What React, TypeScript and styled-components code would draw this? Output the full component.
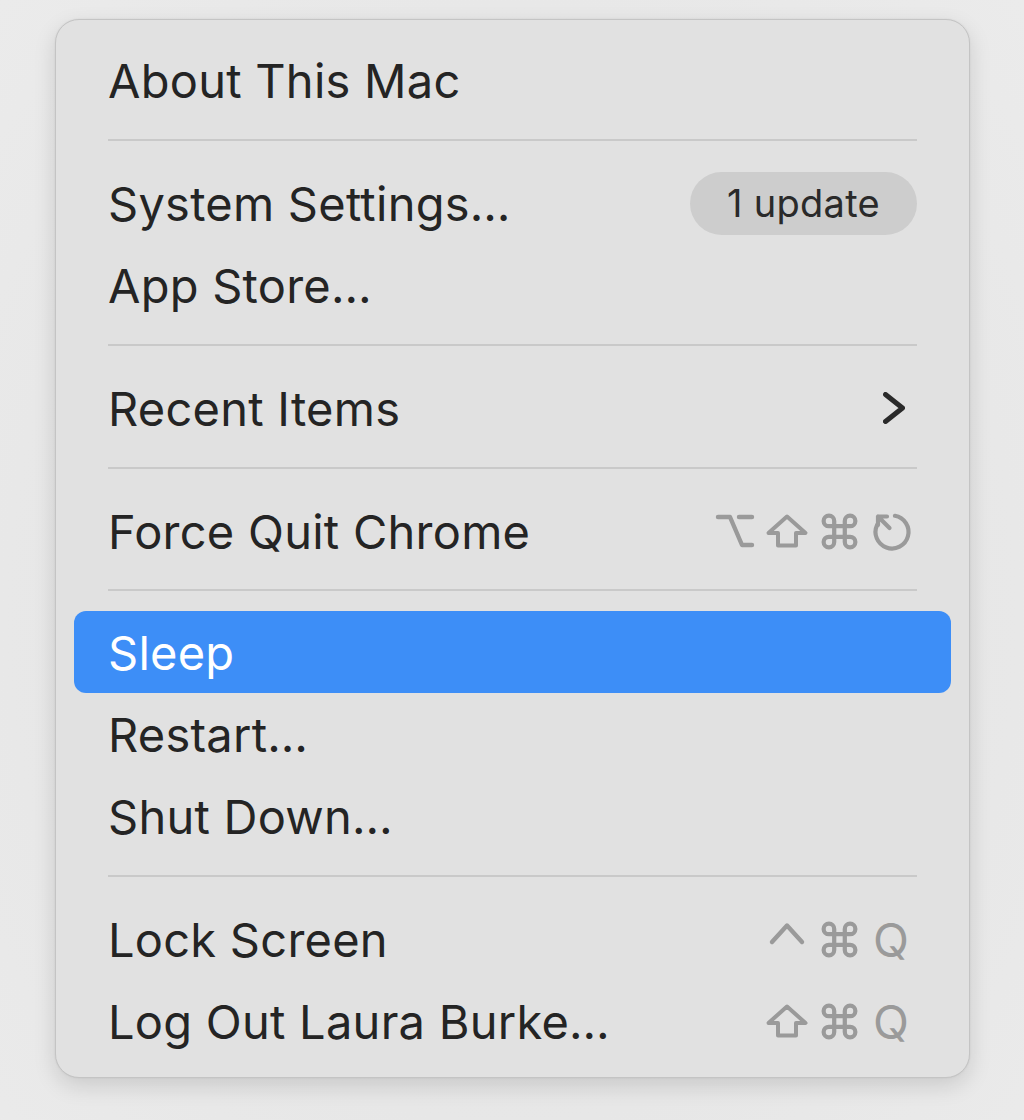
import React from "react";
import styled, { createGlobalStyle } from "styled-components";

const GlobalStyle = createGlobalStyle`
  html, body {
    margin: 0;
    padding: 0;
    background: #e7e7e7;
  }
  body {
    font-family: "Inter", "Noto Sans", "Liberation Sans", sans-serif;
    -webkit-font-smoothing: antialiased;
  }
`;

const Page = styled.div`
  width: 1024px;
  height: 1120px;
  box-sizing: border-box;
  padding: 19px 54px 0 55px;
  background: radial-gradient(ellipse at 50% 55%, #e2e2e2 0%, #e8e8e8 70%, #ebebeb 100%);
`;

const Panel = styled.div`
  width: 915px;
  box-sizing: border-box;
  padding: 19px 18px 15px;
  background: #e1e1e1;
  border: 1px solid #c4c4c4;
  border-radius: 24px;
  box-shadow: 0 8px 22px rgba(0, 0, 0, 0.13), 0 0 2px rgba(0, 0, 0, 0.08);
  display: flex;
  flex-direction: column;
`;

const Row = styled.div<{ $active?: boolean }>`
  height: 82px;
  box-sizing: border-box;
  padding: 0 34px;
  display: flex;
  align-items: center;
  justify-content: space-between;
  border-radius: 12px;
  font-size: 47px;
  line-height: 1;
  letter-spacing: 0.25px;
  color: ${(p) => (p.$active ? "#ffffff" : "#242424")};
  background: ${(p) => (p.$active ? "#3d8ef7" : "transparent")};
`;

const Separator = styled.div<{ $tight?: boolean }>`
  height: 2px;
  margin: ${(p) => (p.$tight ? "17px 34px 20px" : "18px 34px 21px")};
  background: #c9c9c9;
`;

const Badge = styled.span`
  height: 63px;
  box-sizing: border-box;
  padding: 0 37px;
  display: inline-flex;
  align-items: center;
  border-radius: 32px;
  background: #cdcdcd;
  color: #2a2a2a;
  font-size: 38px;
  letter-spacing: 0.3px;
`;

const Shortcut = styled.div`
  display: flex;
  align-items: center;
  color: #9a9a9a;
`;

const Key = styled.span`
  width: 52px;
  height: 44px;
  display: flex;
  align-items: center;
  justify-content: center;
  font-size: 47px;
  color: #9a9a9a;
`;

const KeySvg = styled.svg`
  display: block;
  fill: none;
  stroke: #9a9a9a;
  stroke-width: 4.4;
  stroke-linecap: round;
  stroke-linejoin: round;
  overflow: visible;
`;

const ChevronSvg = styled.svg`
  display: block;
  fill: none;
  stroke: #2a2a2a;
  stroke-width: 5;
  stroke-linecap: round;
  stroke-linejoin: round;
  margin-right: 12px;
`;

const OptionIcon = () => (
  <KeySvg width="40" height="34" viewBox="0 0 40 34">
    <path d="M3 3 H15 L27 31 H37 M24 3 H37" />
  </KeySvg>
);

const ShiftIcon = () => (
  <KeySvg width="42" height="34" viewBox="0 0 42 34" style={{ strokeWidth: 4 }}>
    <path d="M21 2.5 L39.5 19 H30 V31.5 H12 V19 H2.5 Z" />
  </KeySvg>
);

const CommandIcon = () => (
  <KeySvg width="37" height="37" viewBox="1.5 1.5 21 21" style={{ strokeWidth: 2.4 }}>
    <path d="M15 6v12a3 3 0 1 0 3-3H6a3 3 0 1 0 3 3V6a3 3 0 1 0-3 3h12a3 3 0 1 0-3-3" />
  </KeySvg>
);

const EscapeIcon = () => (
  <KeySvg width="40" height="40" viewBox="0 0 40 40" style={{ strokeWidth: 4.2 }}>
    <path d="M23.9 4.75 A16.5 16.5 0 1 1 6.05 14.03" />
    <path d="M7 5.5 H16 M7 5.5 V14 M7 5.5 L18.5 17" />
  </KeySvg>
);

const ControlIcon = () => (
  <KeySvg width="36" height="34" viewBox="0 0 36 34">
    <path d="M3 20 L18 3.5 L33 20" />
  </KeySvg>
);

const Chevron = () => (
  <ChevronSvg width="22" height="32" viewBox="0 0 22 32">
    <path d="M2.5 2.5 L19.5 16 L2.5 29.5" />
  </ChevronSvg>
);

export default function App() {
  return (
    <>
      <GlobalStyle />
      <Page>
        <Panel>
          <Row>About This Mac</Row>
          <Separator />
          <Row>
            <span>System Settings…</span>
            <Badge>1 update</Badge>
          </Row>
          <Row>App Store…</Row>
          <Separator />
          <Row>
            <span>Recent Items</span>
            <Chevron />
          </Row>
          <Separator />
          <Row>
            <span>Force Quit Chrome</span>
            <Shortcut>
              <Key><OptionIcon /></Key>
              <Key><ShiftIcon /></Key>
              <Key><CommandIcon /></Key>
              <Key><EscapeIcon /></Key>
            </Shortcut>
          </Row>
          <Separator $tight />
          <Row $active>Sleep</Row>
          <Row>Restart…</Row>
          <Row>Shut Down…</Row>
          <Separator />
          <Row>
            <span>Lock Screen</span>
            <Shortcut>
              <Key><ControlIcon /></Key>
              <Key><CommandIcon /></Key>
              <Key>Q</Key>
            </Shortcut>
          </Row>
          <Row>
            <span>Log Out Laura Burke…</span>
            <Shortcut>
              <Key><ShiftIcon /></Key>
              <Key><CommandIcon /></Key>
              <Key>Q</Key>
            </Shortcut>
          </Row>
        </Panel>
      </Page>
    </>
  );
}
